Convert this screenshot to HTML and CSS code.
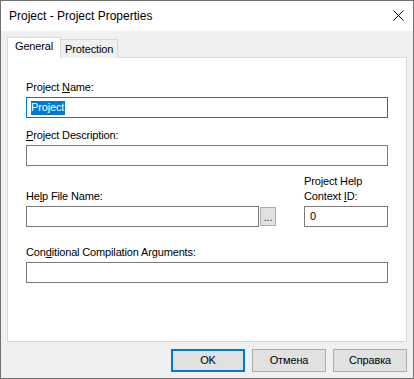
FILE: index.html
```html
<!DOCTYPE html>
<html>
<head>
<meta charset="utf-8">
<link rel="stylesheet" href="styles.css">
</head>
<body>
<div class="window">
  <div class="titlebar">
    <span class="title">Project - Project Properties</span>
    <svg class="close" width="11" height="11" viewBox="0 0 11 11"><path d="M0.5 0.5 L10.5 10.5 M10.5 0.5 L0.5 10.5" stroke="#000" stroke-width="1" fill="none"/></svg>
  </div>
  <div class="body">
    <div class="tabs">
      <div class="tab active">General</div>
      <div class="tab">Protection</div>
    </div>
    <div class="panel">
      <div class="group">
        <div class="label">Project <u>N</u>ame:</div>
        <div class="field focused"><span class="sel">Project</span></div>
      </div>
      <div class="group g2">
        <div class="label"><u>P</u>roject Description:</div>
        <div class="field"></div>
      </div>
      <div class="row3">
        <div class="col">
          <div class="label">He<u>l</u>p File Name:</div>
          <div class="filerow">
            <div class="field grow"></div>
            <div class="browse">...</div>
          </div>
        </div>
        <div class="col">
          <div class="label">Project Help<br>Context <u>I</u>D:</div>
          <div class="field">0</div>
        </div>
      </div>
      <div class="group g4">
        <div class="label">Con<u>d</u>itional Compilation Arguments:</div>
        <div class="field"></div>
      </div>
    </div>
    <div class="buttons">
      <div class="btn default">OK</div>
      <div class="btn">Отмена</div>
      <div class="btn">Справка</div>
    </div>
  </div>
</div>
</body>
</html>
```
FILE: styles.css
```css
* { box-sizing: border-box; }
html, body { margin: 0; padding: 0; background: #fff; }
body {
  font-family: "Liberation Sans", Arial, sans-serif;
  font-size: 11px;
  letter-spacing: -0.15px;
  color: #000;
}
.window {
  width: 414px;
  height: 379px;
  border: 1px solid #707070;
  display: flex;
  flex-direction: column;
  overflow: hidden;
}
.titlebar {
  height: 30px;
  background: #fff;
  display: flex;
  align-items: center;
  padding-left: 8px;
  position: relative;
}
.title { font-size: 12px; letter-spacing: 0; }
.close {
  position: absolute;
  left: 392px;
  top: 9px;
}
.body {
  flex: 1;
  background: #f0f0f0;
  padding: 6px 6px 0 6px;
}
.tabs {
  display: flex;
  align-items: flex-end;
  height: 21px;
  margin-bottom: -1px;
}
.tab {
  height: 19px;
  padding: 0 4px;
  line-height: 18px;
  border: 1px solid #d9d9d9;
  border-bottom: none;
  border-left: none;
  background: #f0f0f0;
}
.tab.active {
  height: 21px;
  line-height: 16px;
  padding: 0 7px 0 7px;
  background: #fff;
  border-left: 1px solid #d9d9d9;
  position: relative;
  z-index: 1;
}
.panel {
  height: 285px;
  background: #fff;
  border: 1px solid #d9d9d9;
  padding: 22px 18px 0 18px;
}
.label { line-height: 15px; margin-bottom: 2px; }
.field {
  height: 21px;
  border: 1px solid #7a7a7a;
  background: #fff;
  padding: 0 5px;
  line-height: 19px;
}
.field.focused { border-color: #0078d7; }
.sel {
  background: #0078d7;
  color: #fff;
  display: inline-block;
  line-height: 13px;
  padding: 0 1px 1px 0;
  margin-left: -1px;
}
.g2 { margin-top: 10px; }
.row3 {
  margin-top: 8px;
  display: grid;
  grid-template-columns: 250px 84px;
  justify-content: space-between;
  align-items: end;
}
.filerow { display: flex; align-items: flex-end; }
.grow { flex: 1; }
.browse {
  width: 16px;
  height: 19px;
  margin-left: 1px;
  margin-bottom: 1px;
  background: #e1e1e1;
  border: 1px solid #adadad;
  font-size: 11px;
  line-height: 18px;
  text-align: center;
  color: #333;
}
.g4 { margin-top: 18px; }
.buttons {
  display: flex;
  justify-content: flex-end;
  gap: 7px;
  margin-top: 7px;
}
.btn {
  width: 74px;
  height: 23px;
  background: #e1e1e1;
  border: 1px solid #adadad;
  text-align: center;
  line-height: 21px;
}
.btn.default {
  border: 2px solid #0078d7;
  line-height: 19px;
}
```
